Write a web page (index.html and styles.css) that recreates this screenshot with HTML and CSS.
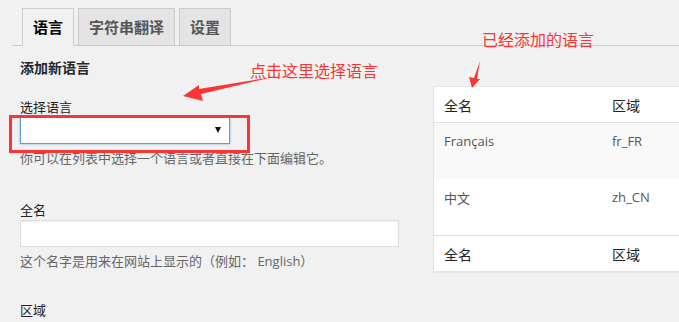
FILE: index.html
```html
<!DOCTYPE html>
<html lang="zh-CN">
<head>
    <meta charset="UTF-8">
    <title>语言设置</title>
    <link rel="stylesheet" href="styles.css">
</head>
<body>
    <div class="page">
        <nav class="tabs">
            <a class="tab active">语言</a>
            <a class="tab">字符串翻译</a>
            <a class="tab">设置</a>
        </nav>

        <div class="content">
            <div class="form-col">
                <h3 class="form-title">添加新语言</h3>

                <div class="field">
                    <label class="field-label">选择语言</label>
                    <div class="select-wrap">
                        <select class="select"><option></option></select>
                        <span class="select-arrow"></span>
                    </div>
                    <p class="hint">你可以在列表中选择一个语言或者直接在下面编辑它。</p>
                </div>

                <div class="field">
                    <label class="field-label">全名</label>
                    <input class="text-input" type="text">
                    <p class="hint">这个名字是用来在网站上显示的（例如： English）</p>
                </div>

                <div class="field field-last">
                    <label class="field-label">区域</label>
                </div>
            </div>

            <div class="table-col">
                <table class="lang-table">
                    <thead>
                        <tr><th class="col-name">全名</th><th>区域</th></tr>
                    </thead>
                    <tbody>
                        <tr class="alt"><td>Français</td><td>fr_FR</td></tr>
                        <tr><td>中文</td><td>zh_CN</td></tr>
                    </tbody>
                    <tfoot>
                        <tr><th class="col-name">全名</th><th>区域</th></tr>
                    </tfoot>
                </table>
            </div>
        </div>
    </div>

    <!-- annotations drawn over the screenshot -->
    <div class="mark-box"></div>
    <span class="note note-select">点击这里选择语言</span>
    <span class="note note-table">已经添加的语言</span>
    <svg class="arrows" width="679" height="322" viewBox="0 0 679 322">
        <polygon points="183,96 199,85 199,89 273,77 201,94 203,101" fill="#f93535"/>
        <polygon points="472,88 469,77 474,78 480,61 477,79 480,79" fill="#f93535"/>
    </svg>
</body>
</html>
```

FILE: styles.css
```css
body {
    margin: 0;
    background: #f1f1f1;
    font-family: "Open Sans", "Noto Sans CJK SC", sans-serif;
    font-size: 13px;
    color: #444;
    overflow: hidden;
    height: 322px;
    position: relative;
}

.page {
    padding: 8px 0 0 12px;
}

.tabs {
    display: flex;
    gap: 4px;
    padding-left: 10px;
    border-bottom: 1px solid #ccc;
    height: 37px;
}

.tab {
    display: block;
    box-sizing: border-box;
    height: 37px;
    padding: 0 10px;
    line-height: 36px;
    font-family: "Noto Sans CJK SC", sans-serif;
    font-size: 15px;
    font-weight: bold;
    color: #555;
    background: #e4e4e4;
    border: 1px solid #ccc;
    border-bottom: none;
}

.tab.active {
    background: #f1f1f1;
    color: #000;
    height: 38px;
}

.content {
    display: flex;
    gap: 33px;
}

.form-col {
    width: 380px;
    padding-left: 8px;
    flex-shrink: 0;
}

.form-title {
    margin: 11px 0 0;
    font-family: "Noto Sans CJK SC", sans-serif;
    font-size: 14px;
    line-height: 20px;
    color: #23282d;
}

.field {
    margin-top: 22px;
}

.field + .field {
    margin-top: 35px;
}

.field + .field-last {
    margin-top: 32px;
}

.field-label {
    display: block;
    font-family: "Noto Sans CJK SC", sans-serif;
    font-size: 13px;
    line-height: 16px;
    color: #222;
    margin-bottom: 2px;
}

.select-wrap {
    position: relative;
    width: 210px;
}

.select {
    display: block;
    width: 210px;
    height: 27px;
    margin: 0;
    box-sizing: border-box;
    -webkit-appearance: none;
    appearance: none;
    background: #fff;
    border: 1px solid #5b9dd9;
    box-shadow: 0 0 2px rgba(30, 140, 190, 0.6);
    border-radius: 0;
}

.select-arrow {
    position: absolute;
    right: 9px;
    top: 10px;
    border-left: 3.5px solid transparent;
    border-right: 3.5px solid transparent;
    border-top: 6px solid #111;
}

.text-input {
    display: block;
    width: 379px;
    height: 27px;
    margin: 0;
    box-sizing: border-box;
    background: #fff;
    border: 1px solid #ddd;
    box-shadow: inset 0 1px 2px rgba(0, 0, 0, 0.07);
}

.hint {
    margin: 5px 0 0;
    font-size: 13px;
    line-height: 18px;
    color: #666;
}

.table-col {
    margin-top: 40px;
}

.lang-table {
    width: 320px;
    border-collapse: collapse;
    background: #fff;
    border: 1px solid #e5e5e5;
    box-shadow: 0 1px 1px rgba(0, 0, 0, 0.04);
}

.lang-table th {
    text-align: left;
    font-family: "Noto Sans CJK SC", sans-serif;
    font-weight: normal;
    font-size: 14px;
    color: #222;
    height: 35px;
    padding: 0 10px;
}

.lang-table .col-name {
    width: 148px;
}

.lang-table thead th {
    border-bottom: 1px solid #e1e1e1;
}

.lang-table tfoot th {
    border-top: 1px solid #e1e1e1;
}

.lang-table td {
    vertical-align: top;
    padding: 9px 10px 0;
    height: 47px;
    font-size: 13px;
    color: #555;
}

.lang-table tr.alt td {
    background: #f9f9f9;
}

.mark-box {
    position: absolute;
    left: 9px;
    top: 115px;
    width: 235px;
    height: 32px;
    border: 3px solid #f93535;
}

.note {
    position: absolute;
    font-family: "Noto Sans CJK SC", sans-serif;
    font-size: 16px;
    line-height: 20px;
    color: #f93535;
    white-space: nowrap;
}

.note-select {
    left: 250px;
    top: 60px;
}

.note-table {
    left: 482px;
    top: 29px;
}

.arrows {
    position: absolute;
    left: 0;
    top: 0;
}
```
